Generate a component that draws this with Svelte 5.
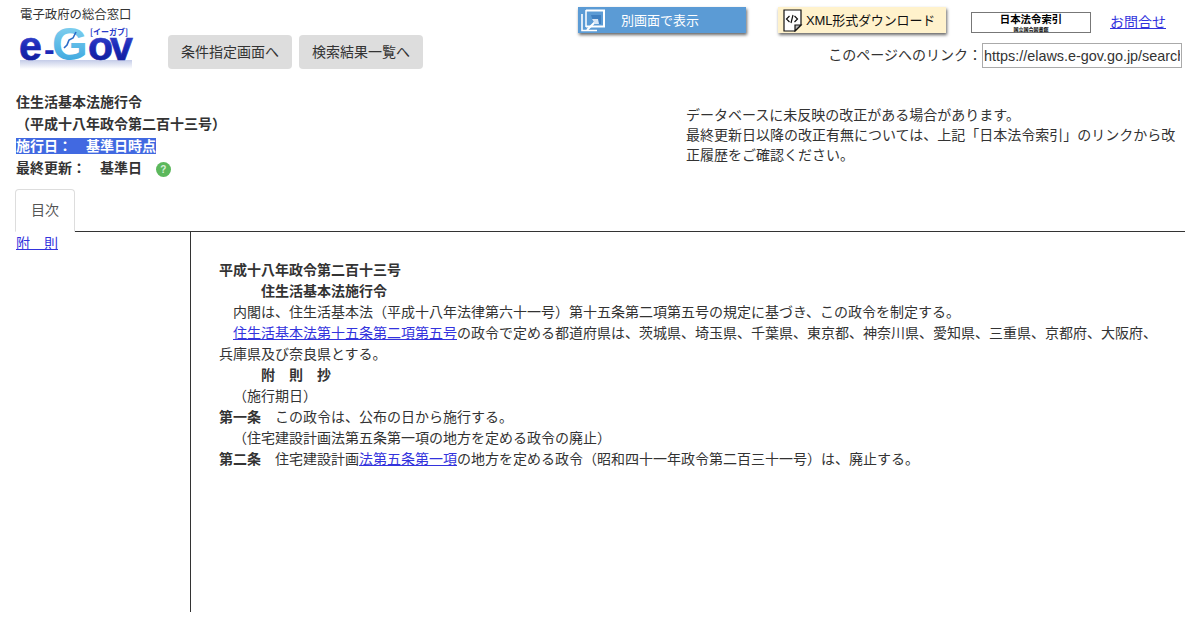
<script>
  const provisions = [
    { cls: 'bold', text: '平成十八年政令第二百十三号' },
    { cls: 'bold title', text: '住生活基本法施行令' },
    { cls: 'para', text: '内閣は、住生活基本法（平成十八年法律第六十一号）第十五条第二項第五号の規定に基づき、この政令を制定する。' }
  ]
</script>

<div class="page">
  <header class="top">
    <a class="logo" href="#top">
      <span class="tagline">電子政府の総合窓口</span>
      <svg class="logomark" width="116" height="54" viewBox="0 -6 116 54">
        <defs>
          <linearGradient id="blue" x1="0" y1="0" x2="0" y2="1">
            <stop offset="0" stop-color="#5560e0" />
            <stop offset="0.5" stop-color="#1c2ab8" />
            <stop offset="1" stop-color="#0d1a90" />
          </linearGradient>
          <linearGradient id="sky" x1="0" y1="0" x2="0" y2="1">
            <stop offset="0" stop-color="#8fd8f2" />
            <stop offset="1" stop-color="#2f9fdc" />
          </linearGradient>
          <linearGradient id="haze" x1="0" y1="0" x2="0" y2="1">
            <stop offset="0" stop-color="#c4cce8" />
            <stop offset="1" stop-color="#fff" />
          </linearGradient>
        </defs>
        <rect x="2" y="37" width="112" height="9" fill="url(#haze)" />
        <text x="1" y="37" class="mark-e" fill="url(#blue)" stroke="url(#blue)" stroke-width="0.7">e</text>
        <text x="26" y="37" class="mark-dash" fill="#1c2ab8">-</text>
        <text x="34" y="37" class="mark-g" fill="url(#sky)">G</text>
        <text x="70" y="37" class="mark-ov" fill="url(#blue)" stroke="url(#blue)" stroke-width="0.7">o</text>
        <text x="92" y="37" class="mark-ov" fill="url(#blue)" stroke="url(#blue)" stroke-width="0.7">v</text>
        <path d="M58 9l-3 6-4 2-2 5-3 3" fill="none" stroke="#2a6cc8" stroke-width="1.6" />
        <text x="72" y="12" class="mark-kana" textLength="38" lengthAdjust="spacingAndGlyphs">[イーガブ]</text>
      </svg>
    </a>

    <nav class="steps">
      <button class="step">条件指定画面へ</button>
      <button class="step">検索結果一覧へ</button>
    </nav>

    <div class="tools">
      <div class="tool-row">
        <button class="tool blue">
          <svg width="25" height="24" viewBox="0 0 25 24" fill="none" stroke="#fff">
            <path d="M6 2.500h18v16H6" stroke-width="2" />
            <path d="M6 2v17" stroke-width="1.500" />
            <path d="M2 6v16.500h15" stroke-width="1.600" />
            <path d="M11 7h10v9H14z" fill="#3f7fc0" stroke="none" />
            <path d="M7 22l9-9" stroke-width="2" />
            <path d="M12 11h6l1 5h-4z" fill="#d6e6f6" stroke="none" />
          </svg>
          <span>別画面で表示</span>
        </button>
        <button class="tool cream">
          <svg width="21" height="23" viewBox="0 0 21 23" fill="#fff" stroke="#111" stroke-width="1.2">
            <path d="M2 1h17v15l-6 6H2z" />
            <path d="M19 16h-6v6z" fill="#bbb" />
            <path d="M7.500 7l-3 3 3 3M12.500 7l3 3-3 3M11 6l-2 8" fill="none" />
          </svg>
          <span>XML形式ダウンロード</span>
        </button>
        <a class="houreisakuin" href="#top">
          <span class="hs-main">日本法令索引</span>
          <span class="hs-sub">国立国会図書館</span>
        </a>
        <a class="contact" href="#top">お問合せ</a>
      </div>
      <div class="link-row">
        <label for="pagelink">このページへのリンク：</label>
        <input id="pagelink" value="https://elaws.e-gov.go.jp/search/elawsSearch/elaws_search/lsg0500/detail" readonly />
      </div>
    </div>
  </header>

  <section class="summary">
    <div class="law-info">
      <div>住生活基本法施行令</div>
      <div>（平成十八年政令第二百十三号）</div>
      <div><span class="selected">施行日：　基準日時点</span></div>
      <div class="updated">
        最終更新：　基準日
        <span class="help">?</span>
      </div>
    </div>
    <p class="notice">
      データベースに未反映の改正がある場合があります。<br />
      最終更新日以降の改正有無については、上記「日本法令索引」のリンクから改正履歴をご確認ください。
    </p>
  </section>

  <div class="tabs">
    <div class="tab">目次</div>
  </div>

  <main class="body">
    <aside class="toc"><a href="#suppl">附　則</a></aside>
    <article class="law">
      {#each provisions as p}
        <div class={p.cls}>{p.text}</div>
      {/each}
      <div class="para"><a href="#a15">住生活基本法第十五条第二項第五号</a>の政令で定める都道府県は、茨城県、埼玉県、千葉県、東京都、神奈川県、愛知県、三重県、京都府、大阪府、兵庫県及び奈良県とする。</div>
      <div class="bold title" id="suppl">附　則　抄</div>
      <div class="caption">（施行期日）</div>
      <div><b>第一条</b>　この政令は、公布の日から施行する。</div>
      <div class="caption">（住宅建設計画法第五条第一項の地方を定める政令の廃止）</div>
      <div><b>第二条</b>　住宅建設計画<a href="#a5">法第五条第一項</a>の地方を定める政令（昭和四十一年政令第二百三十一号）は、廃止する。</div>
    </article>
  </main>
</div>

<style>
  :global(body) {
    margin: 0;
    background: #fff;
  }
  .page {
    width: 1200px;
    height: 630px;
    overflow: hidden;
    font-family: "Liberation Sans", "Noto Sans CJK JP", sans-serif;
    font-size: 14px;
    color: #333;
    box-sizing: border-box;
  }
  a {
    color: #3333dd;
  }
  .top {
    display: flex;
    height: 91px;
  }
  .logo {
    display: flex;
    flex-direction: column;
    width: 116px;
    margin: 8px 0 0 18px;
    text-decoration: none;
  }
  .tagline {
    font-size: 12.400px;
    line-height: 15px;
    color: #333;
    white-space: nowrap;
    padding-left: 2px;
  }
  .logomark {
    display: block;
    margin-top: -6px;
  }
  .mark-e, .mark-ov {
    font: bold 41px "Liberation Sans", sans-serif;
  }
  .mark-dash {
    font: bold 32px "Liberation Sans", sans-serif;
  }
  .mark-g {
    font: bold 46px "Liberation Sans", sans-serif;
  }
  .mark-kana {
    font: bold 8px "Noto Sans CJK JP", sans-serif;
    fill: #2a3ac8;
  }
  .steps {
    display: flex;
    gap: 7px;
    margin: 35px 0 0 34px;
    align-items: flex-start;
  }
  .step {
    width: 124px;
    height: 34px;
    border: 0;
    border-radius: 4px;
    background: #ddd;
    color: #333;
    font: inherit;
    padding: 0 0 2px;
  }
  .tools {
    margin-left: 155px;
    width: 604px;
  }
  .tool-row {
    display: flex;
    align-items: flex-start;
    margin-top: 7px;
    height: 36px;
  }
  .tool {
    display: flex;
    align-items: center;
    width: 168px;
    height: 26px;
    border: 0;
    padding: 0;
    font: inherit;
    font-size: 13px;
    box-shadow: 1px 2px 3px rgba(0, 0, 0, 0.6);
  }
  .tool span {
    padding-bottom: 1px;
  }
  .tool.blue {
    background: #5b9bd5;
    color: #fff;
    margin-right: 32px;
    gap: 16px;
    padding-left: 2px;
  }
  .tool.cream {
    background: #fff2cc;
    color: #111;
    gap: 3px;
    padding-left: 4px;
    margin-right: 25px;
    letter-spacing: -0.15px;
  }
  .houreisakuin {
    display: flex;
    flex-direction: column;
    align-items: center;
    box-sizing: border-box;
    width: 120px;
    height: 21px;
    margin-top: 5px;
    padding-top: 1px;
    border: 1px solid #777;
    color: #000;
    text-decoration: none;
  }
  .hs-main {
    font-size: 10.400px;
    font-weight: bold;
    line-height: 12px;
  }
  .hs-sub {
    font-size: 5px;
    line-height: 6px;
    font-weight: bold;
  }
  .contact {
    margin: 7px 0 0 19px;
    line-height: 16px;
  }
  .link-row {
    display: flex;
    align-items: center;
    justify-content: flex-end;
    width: 604px;
    height: 25px;
  }
  label {
    margin-bottom: 3px;
  }
  input {
    box-sizing: border-box;
    width: 200px;
    height: 25px;
    padding: 1px;
    border: 1px solid #aaa;
    font: 14.400px "Liberation Sans", sans-serif;
    color: #333;
  }
  .summary {
    display: flex;
    height: 98px;
    padding-left: 16px;
  }
  .law-info {
    width: 670px;
    font-weight: bold;
    line-height: 22px;
  }
  .selected {
    background: #4169e1;
    color: #fff;
  }
  .help {
    display: inline-block;
    width: 15px;
    height: 15px;
    margin-left: 10px;
    border-radius: 50%;
    background: #5cb85c;
    color: #d8efd8;
    font-size: 10px;
    line-height: 15px;
    text-align: center;
    vertical-align: 0;
  }
  .notice {
    width: 498px;
    margin: 14px 0 0;
    line-height: 20px;
  }
  .tabs {
    display: flex;
    margin-left: 15px;
    width: 1170px;
    height: 43px;
    box-sizing: border-box;
    border-bottom: 1px solid #333;
  }
  .tab {
    box-sizing: border-box;
    width: 60px;
    height: 43px;
    border: 1px solid #ddd;
    border-bottom: 1px solid #fff;
    border-radius: 4px 4px 0 0;
    text-align: center;
    line-height: 41px;
    color: #555;
  }
  .body {
    display: flex;
    width: 1170px;
    height: 380px;
    margin-left: 15px;
  }
  .toc {
    box-sizing: border-box;
    width: 176px;
    padding-left: 1px;
    border-right: 1px solid #333;
    line-height: 23px;
  }
  .law {
    flex: 1;
    padding: 28px 28px 0;
    line-height: 21px;
  }
  .bold, b {
    font-weight: bold;
  }
  .title {
    padding-left: 42px;
  }
  .para, .caption {
    text-indent: 14px;
  }
</style>
